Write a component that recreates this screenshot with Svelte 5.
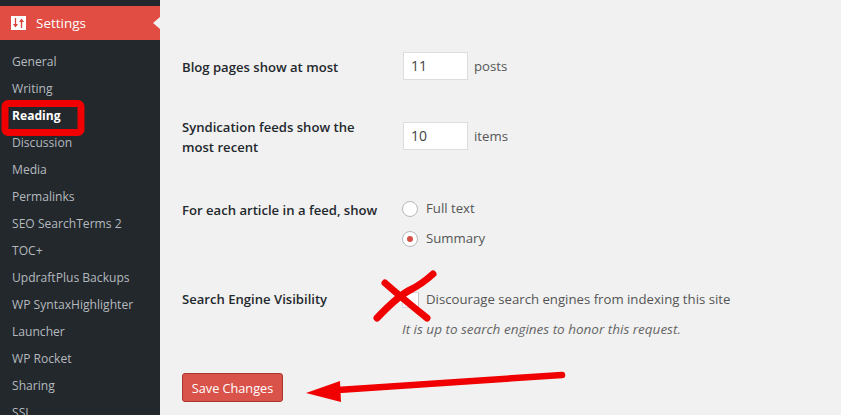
<script>
  const items = ['General','Writing','Reading','Discussion','Media','Permalinks','SEO SearchTerms 2','TOC+','UpdraftPlus Backups','WP SyntaxHighlighter','Launcher','WP Rocket','Sharing','SSL'];
</script>

<div class="page">
  <aside class="side">
    <div class="head">
      <svg class="gear" width="15" height="14" viewBox="0 0 15 14">
        <rect width="15" height="14" fill="#fff"/>
        <path d="M4.500 2v8M10.500 4v8" stroke="#d9443b" stroke-width="1.300"/>
        <path d="M2 8h5L4.500 11.500ZM8 6h5L10.500 2.500Z" fill="#d9443b"/>
      </svg>
      <span>Settings</span>
      <i class="notch"></i>
    </div>
    <ul class="menu">
      {#each items as it}
        <li class:cur={it === 'Reading'}>{it}</li>
      {/each}
    </ul>
  </aside>

  <main class="main">
    <div class="row r1">
      <div class="lab">Blog pages show at most</div>
      <div class="field"><span class="inp">11</span><span>posts</span></div>
    </div>
    <div class="row r2">
      <div class="lab two">Syndication feeds show the most recent</div>
      <div class="field"><span class="inp">10</span><span>items</span></div>
    </div>
    <div class="row r3">
      <div class="lab">For each article in a feed, show</div>
      <div class="radios">
        <div class="radio"><i class="dot"></i>Full text</div>
        <div class="radio"><i class="dot on"></i>Summary</div>
      </div>
    </div>
    <div class="row r4">
      <div class="lab">Search Engine Visibility</div>
      <div>
        <div class="check"><i class="box"></i>Discourage search engines from indexing this site</div>
        <div class="note">It is up to search engines to honor this request.</div>
      </div>
    </div>
    <button class="save">Save Changes</button>
  </main>

  <svg class="marks" width="841" height="415" viewBox="0 0 841 415">
    <rect x="5" y="103.500" width="76" height="29" rx="3" fill="none" stroke="#f00000" stroke-width="7"/>
    <path d="M385 283Q402 298 427 318" fill="none" stroke="#f00000" stroke-width="7" stroke-linecap="round"/>
    <path d="M377 318Q398 296 410 290T433 274" fill="none" stroke="#f00000" stroke-width="7" stroke-linecap="round"/>
    <path d="M338 390L562 375" fill="none" stroke="#f00000" stroke-width="6.500" stroke-linecap="round"/>
    <path d="M306 393L340 381L341 402Z" fill="#f00000"/>
  </svg>
</div>

<style>
  :global(body) { margin: 0; }
  .page {
    position: relative; display: flex; width: 841px; height: 415px; overflow: hidden;
    background: #f1f1f1; font: 13.200px/19px "Open Sans", "Noto Sans", sans-serif; color: #555;
  }
  .side { width: 160px; flex: none; background: #23282d; padding-top: 6px; box-sizing: border-box; }
  .head {
    position: relative; display: flex; align-items: center; gap: 10px; height: 34px;
    padding-left: 11px; background: #e14d43; color: #fff; font-size: 13.500px;
  }
  .notch {
    position: absolute; right: 0; top: 11px; border: 6px solid transparent; border-right: 7px solid #f1f1f1; border-left: 0;
  }
  .menu { list-style: none; margin: 0; padding: 8px 0 0 12px; color: #b4b9be; font-size: 12.100px; }
  .menu li { height: 27px; line-height: 27px; white-space: nowrap; }
  .menu .cur { color: #fff; font-weight: 700; }

  .main { flex: 1; padding-left: 22px; }
  .row { display: flex; }
  .lab { width: 221px; flex: none; color: #23282d; font-weight: 600; font-size: 13.100px; }
  .two { width: 190px; margin-right: 31px; line-height: 20px; }
  .r1 { margin-top: 52px; align-items: center; height: 28px; }
  .r1 .lab { margin-top: 2px; }
  .r2 { margin-top: 42px; height: 40px; }
  .r2 .lab { margin-top: -5px; }
  .r3 { margin-top: 37px; }
  .r3 .lab { margin-top: 2px; }
  .r4 { margin-top: 37px; }
  .r4 .lab { margin-top: 5px; }
  .field { display: flex; align-items: center; gap: 6px; height: 28px; }
  .inp {
    box-sizing: border-box; width: 65px; height: 28px; padding-left: 7px; line-height: 26px;
    background: #fff; border: 1px solid #ddd; font-size: 14px; color: #444;
  }
  .radios { display: flex; flex-direction: column; gap: 11px; }
  .radio { display: flex; align-items: center; gap: 8px; height: 19px; }
  .dot {
    box-sizing: border-box; width: 16px; height: 16px; margin-left: -1px; border-radius: 50%;
    background: #fff; border: 1px solid #b4b9be; display: grid; place-items: center;
  }
  .on::after { content: ""; width: 6px; height: 6px; border-radius: 50%; background: #d64e46; }
  .check { display: flex; align-items: center; gap: 7px; height: 19px; margin-top: 5px; }
  .box { box-sizing: border-box; width: 17px; height: 16px; margin-left: -1px; background: #fff; border: 1px solid #ddd; border-right-color: #c4c4c4; }
  .note { margin-top: 11px; margin-left: -1px; font-size: 13.500px; font-style: italic; color: #666; }
  .save {
    display: block; box-sizing: border-box; margin-top: 34px; width: 101px; height: 29px; padding: 0;
    background: #d9534a; border: 1px solid #a9362e; border-radius: 3px; color: #fff;
    font: 12.700px "Open Sans", "Noto Sans", sans-serif;
  }
  .marks { position: absolute; left: 0; top: 0; pointer-events: none; }
</style>
